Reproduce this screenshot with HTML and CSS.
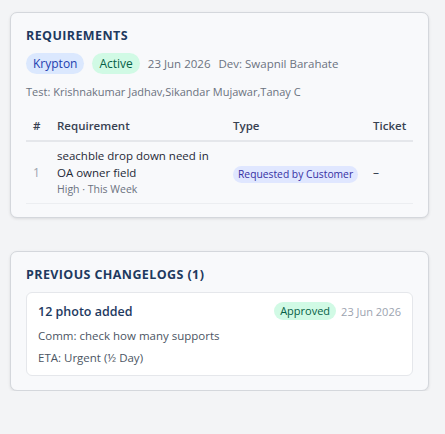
FILE: index.html
```html
<!DOCTYPE html>
<html lang="en">
<head>
<meta charset="utf-8">
<link rel="stylesheet" href="styles.css">
</head>
<body>
<div class="page">
  <section class="card">
    <h2 class="title">REQUIREMENTS</h2>
    <div class="meta">
      <span class="pill pill-blue">Krypton</span>
      <span class="pill pill-green">Active</span>
      <span class="meta-text">23 Jun 2026</span>
      <span class="meta-text">Dev: Swapnil Barahate</span>
    </div>
    <div class="test">Test: Krishnakumar Jadhav,Sikandar Mujawar,Tanay C</div>
    <table class="req">
      <colgroup>
        <col class="w-num"><col class="w-req"><col class="w-type"><col>
      </colgroup>
      <thead>
        <tr><th class="c-num">#</th><th>Requirement</th><th>Type</th><th>Ticket</th></tr>
      </thead>
      <tbody>
        <tr>
          <td class="c-num num">1</td>
          <td><div class="req-name">seachble drop down need in OA owner field</div><div class="req-sub">High · This Week</div></td>
          <td><span class="pill-type">Requested by Customer</span></td>
          <td class="c-ticket">–</td>
        </tr>
      </tbody>
    </table>
  </section>

  <section class="card card2">
    <h2 class="title">PREVIOUS CHANGELOGS (1)</h2>
    <div class="log">
      <div class="log-head">
        <div class="log-title">12 photo added</div>
        <div class="log-right">
          <span class="pill-approved">Approved</span>
          <span class="log-date">23 Jun 2026</span>
        </div>
      </div>
      <div class="log-line">Comm: check how many supports</div>
      <div class="log-line">ETA: Urgent (½ Day)</div>
    </div>
  </section>
</div>
</body>
</html>
```
FILE: styles.css
```css
html, body {
  margin: 0;
  padding: 0;
  background: #f3f4f6;
  font-family: "Open Sans", "Noto Sans", sans-serif;
}
.page {
  width: 419px;
  padding: 12px 0 0 10px;
  display: flex;
  flex-direction: column;
  gap: 33px;
}
.card {
  background: #f8f9fb;
  border: 1px solid #d4d7dc;
  border-radius: 7px;
  box-shadow: 0 1px 3px rgba(0,0,0,0.10);
  padding: 14px 15px 13px 15px;
}
.title {
  margin: 0;
  font-size: 12.5px;
  font-weight: 700;
  color: #1e3a5f;
  letter-spacing: 0.4px;
  line-height: 18px;
}
.meta {
  display: flex;
  align-items: center;
  gap: 8px;
  margin-top: 8px;
}
.pill {
  display: inline-block;
  padding: 0 7px;
  height: 21px;
  line-height: 21px;
  border-radius: 11px;
  font-size: 12px;
}
.pill-blue { background: #dbe8fe; color: #1e40af; }
.pill-green { background: #d1fae5; color: #065f46; }
.meta-text {
  font-size: 11.5px;
  color: #6b7280;
}
.test {
  margin-top: 10px;
  font-size: 11px;
  color: #6b7280;
  line-height: 16px;
}
.req {
  margin-top: 17px;
  width: 100%;
  border-collapse: collapse;
  table-layout: fixed;
}
.w-num { width: 23px; }
.w-req { width: 176px; }
.w-type { width: 140px; }
.req th {
  text-align: left;
  font-size: 11.5px;
  font-weight: 600;
  color: #374151;
  padding: 0 8px 5px 8px;
  line-height: 18px;
  border-bottom: 2px solid #e5e7eb;
}
.req td {
  padding: 5px 8px 6px 8px;
  vertical-align: middle;
  border-bottom: 1px solid #eceef1;
}
.req .c-num { padding-left: 7px; padding-right: 0; }
.num { color: #9ca3af; font-size: 12px; }
.req-name {
  font-size: 11.5px;
  font-weight: 500;
  color: #1f2937;
  line-height: 17px;
}
.req-sub {
  margin-top: 1px;
  font-size: 10.5px;
  color: #6b7280;
  line-height: 15px;
}
.pill-type {
  display: inline-block;
  background: #e0e7ff;
  color: #3730a3;
  font-size: 10.3px;
  padding: 0 5px;
  height: 17px;
  line-height: 17px;
  border-radius: 9px;
  white-space: nowrap;
}
.c-ticket { color: #374151; font-size: 12px; }
.card2 { padding-bottom: 14px; }
.log {
  margin-top: 8px;
  background: #ffffff;
  border: 1px solid #e5e7eb;
  border-radius: 6px;
  padding: 9px 11px 9px 11px;
}
.log-head {
  display: flex;
  justify-content: space-between;
  align-items: flex-start;
}
.log-title {
  font-size: 12.5px;
  font-weight: 600;
  color: #1e3a5f;
  line-height: 20px;
}
.log-right {
  display: flex;
  align-items: center;
  gap: 5px;
}
.pill-approved {
  background: #d1fae5;
  color: #065f46;
  font-size: 11px;
  padding: 0 6px;
  height: 18px;
  line-height: 18px;
  border-radius: 9px;
}
.log-date {
  font-size: 11px;
  color: #9ca3af;
}
.log-line {
  font-size: 11.5px;
  color: #4b5563;
  line-height: 16px;
  margin-top: 6px;
}
```
